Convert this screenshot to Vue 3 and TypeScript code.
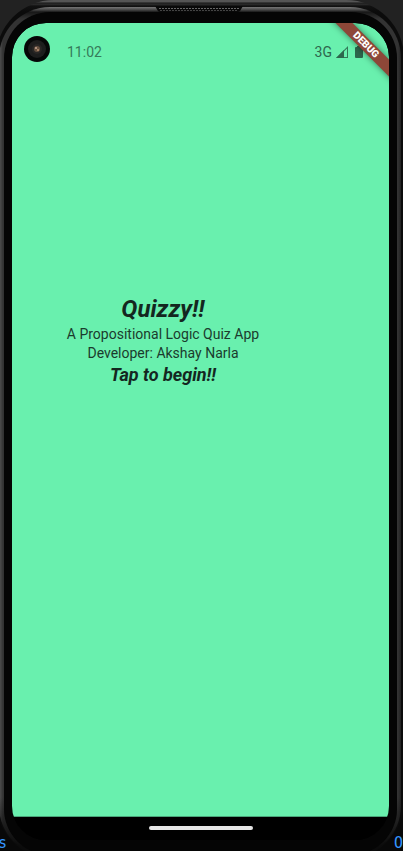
<script setup lang="ts">
import { ref } from 'vue'

const started = ref(false)
const subtitle: string[] = ['A Propositional Logic Quiz App', 'Developer: Akshay Narla']

function begin(): void {
  started.value = true
}
</script>

<template>
  <div class="desk">
    <div class="device">
      <div class="rim">
        <div class="bezel">
          <svg class="speaker" viewBox="0 0 88 6" aria-hidden="true">
            <path d="M0 0H88L85 5Q84 6 82 6H6Q4 6 3 5Z" fill="#090909" />
            <path d="M4 2.5H84" stroke="#666" stroke-width="1" stroke-dasharray="2 1" />
            <path d="M5 4.5H83" stroke="#444" stroke-width="1" stroke-dasharray="2 1" />
          </svg>
          <div class="screen">
            <div class="page">
              <header class="status">
                <svg class="camera" viewBox="0 0 26 26" aria-hidden="true">
                  <circle cx="13" cy="13" r="13" fill="#050707" />
                  <circle cx="13" cy="13" r="9" fill="#1d1d1d" />
                  <circle cx="13" cy="13" r="5" fill="#292625" />
                  <circle cx="13" cy="13" r="3" fill="#65503f" />
                  <circle cx="12" cy="12" r="1" fill="#c7a594" />
                  <circle cx="14" cy="14" r="1" fill="#b88c70" />
                </svg>
                <time class="clock">11:02</time>
                <span class="network">3G</span>
                <svg class="signal" viewBox="0 0 12 12" aria-hidden="true">
                  <path d="M0 12L12 0V12Z M8 5.5V11H11V2.5Z" fill="#347858" fill-rule="evenodd" />
                  <path d="M0 12L8 4V12Z" fill="#2d674d" />
                </svg>
                <svg class="battery" viewBox="0 0 8 12" aria-hidden="true">
                  <path d="M2 0H6V1H7Q8 1 8 2V11Q8 12 7 12H1Q0 12 0 11V2Q0 1 1 1H2Z" fill="#2d674d" />
                </svg>
              </header>
              <main class="app">
                <button class="intro" type="button" :aria-pressed="started" @click="begin">
                  <strong class="title">Quizzy!!</strong>
                  <span v-for="line in subtitle" :key="line" class="line">{{ line }}</span>
                  <strong class="tap">Tap to begin!!</strong>
                </button>
              </main>
            </div>
            <footer class="nav"><span class="handle"></span></footer>
            <div class="banner">DEBUG</div>
          </div>
        </div>
      </div>
    </div>
    <div class="behind"><span>s</span><span>O</span></div>
  </div>
</template>

<style>
body {
  background: #222;
}
</style>

<style scoped>
* {
  box-sizing: border-box;
}
.desk {
  position: relative;
  height: 100vh;
  overflow: hidden;
  background: linear-gradient(#222 0 50%, #080808 50%);
  font-family: Roboto, 'Liberation Sans', sans-serif;
}
.behind {
  position: absolute;
  right: 0;
  bottom: 0;
  left: -2px;
  display: flex;
  justify-content: space-between;
  color: #3596ff;
  font-family: 'DejaVu Sans Mono', monospace;
  font-size: 15px;
  line-height: 16px;
}
.device {
  position: relative;
  height: calc(100vh + 8px);
  margin: 0 -1px 0 -4px;
  padding: 7px 3px 2px;
  border-radius: 58px;
  background: linear-gradient(#555 0, #555 2px, #151515 3px, #303030 4px, #111 6px, #0b0b0b 12px);
}
.rim {
  height: 100%;
  padding: 5px 4px 2px 5px;
  border-radius: 51px;
  background:
    linear-gradient(#777 0, #444 3px, #171717 5px, transparent 12px),
    linear-gradient(transparent calc(100% - 60px), #0b0b0b calc(100% - 10px)),
    linear-gradient(90deg, #555 0, #333 4px, #333 50%, #333 calc(100% - 3px), #222 100%);
}
.bezel {
  position: relative;
  height: 100%;
  padding: 11px 8px 15px;
  border-radius: 46px;
  background: #050505;
}
.speaker {
  position: absolute;
  top: -6px;
  left: calc(50% - 46px);
  width: 88px;
  height: 6px;
}
.screen {
  position: relative;
  display: flex;
  flex-direction: column;
  height: 100%;
  overflow: hidden;
  border-radius: 34px;
  background: #000;
}
.page {
  display: flex;
  flex: 1;
  flex-direction: column;
  border-radius: 34px 34px 0 0;
  background: #69f0ae;
}
.status {
  display: flex;
  align-items: center;
  height: 58px;
  padding: 0 26px 0 12px;
  color: #357b5a;
  font-size: 14px;
  line-height: 16px;
}
.camera {
  width: 26px;
  height: 26px;
  margin-bottom: 6px;
}
.clock {
  margin-left: 17px;
}
.network {
  margin-left: auto;
  color: #2d674d;
}
.signal {
  width: 12px;
  height: 12px;
  margin-left: 4px;
}
.battery {
  width: 8px;
  height: 12px;
  margin-left: 7px;
}
.app {
  flex: 1;
  width: 302px;
  max-width: 100%;
  padding-top: 212px;
}
.intro {
  display: flex;
  flex-direction: column;
  align-items: center;
  width: 100%;
  padding: 0;
  border: 0;
  background: none;
  color: #14271f;
  font: inherit;
  cursor: pointer;
}
.title {
  font-size: 24px;
  font-style: italic;
  line-height: 32px;
}
.line {
  color: #1b3b2d;
  font-size: 14px;
  line-height: 19px;
}
.tap {
  font-size: 18px;
  font-style: italic;
  line-height: 24px;
}
.nav {
  display: flex;
  justify-content: center;
  height: 24px;
  padding-top: 9px;
  border-top: 1px solid #4aa57a;
  background: #000;
}
.handle {
  width: 104px;
  height: 4px;
  border-radius: 2px;
  background: #e6e6e6;
}
.banner {
  position: absolute;
  top: 16px;
  right: -27px;
  width: 100px;
  height: 12px;
  transform: rotate(45deg);
  background: #8d4738;
  box-shadow: 0 0 6px rgba(0, 0, 0, 0.5);
  color: #fff;
  font-size: 10px;
  font-weight: 900;
  line-height: 12px;
  text-align: center;
}
</style>
